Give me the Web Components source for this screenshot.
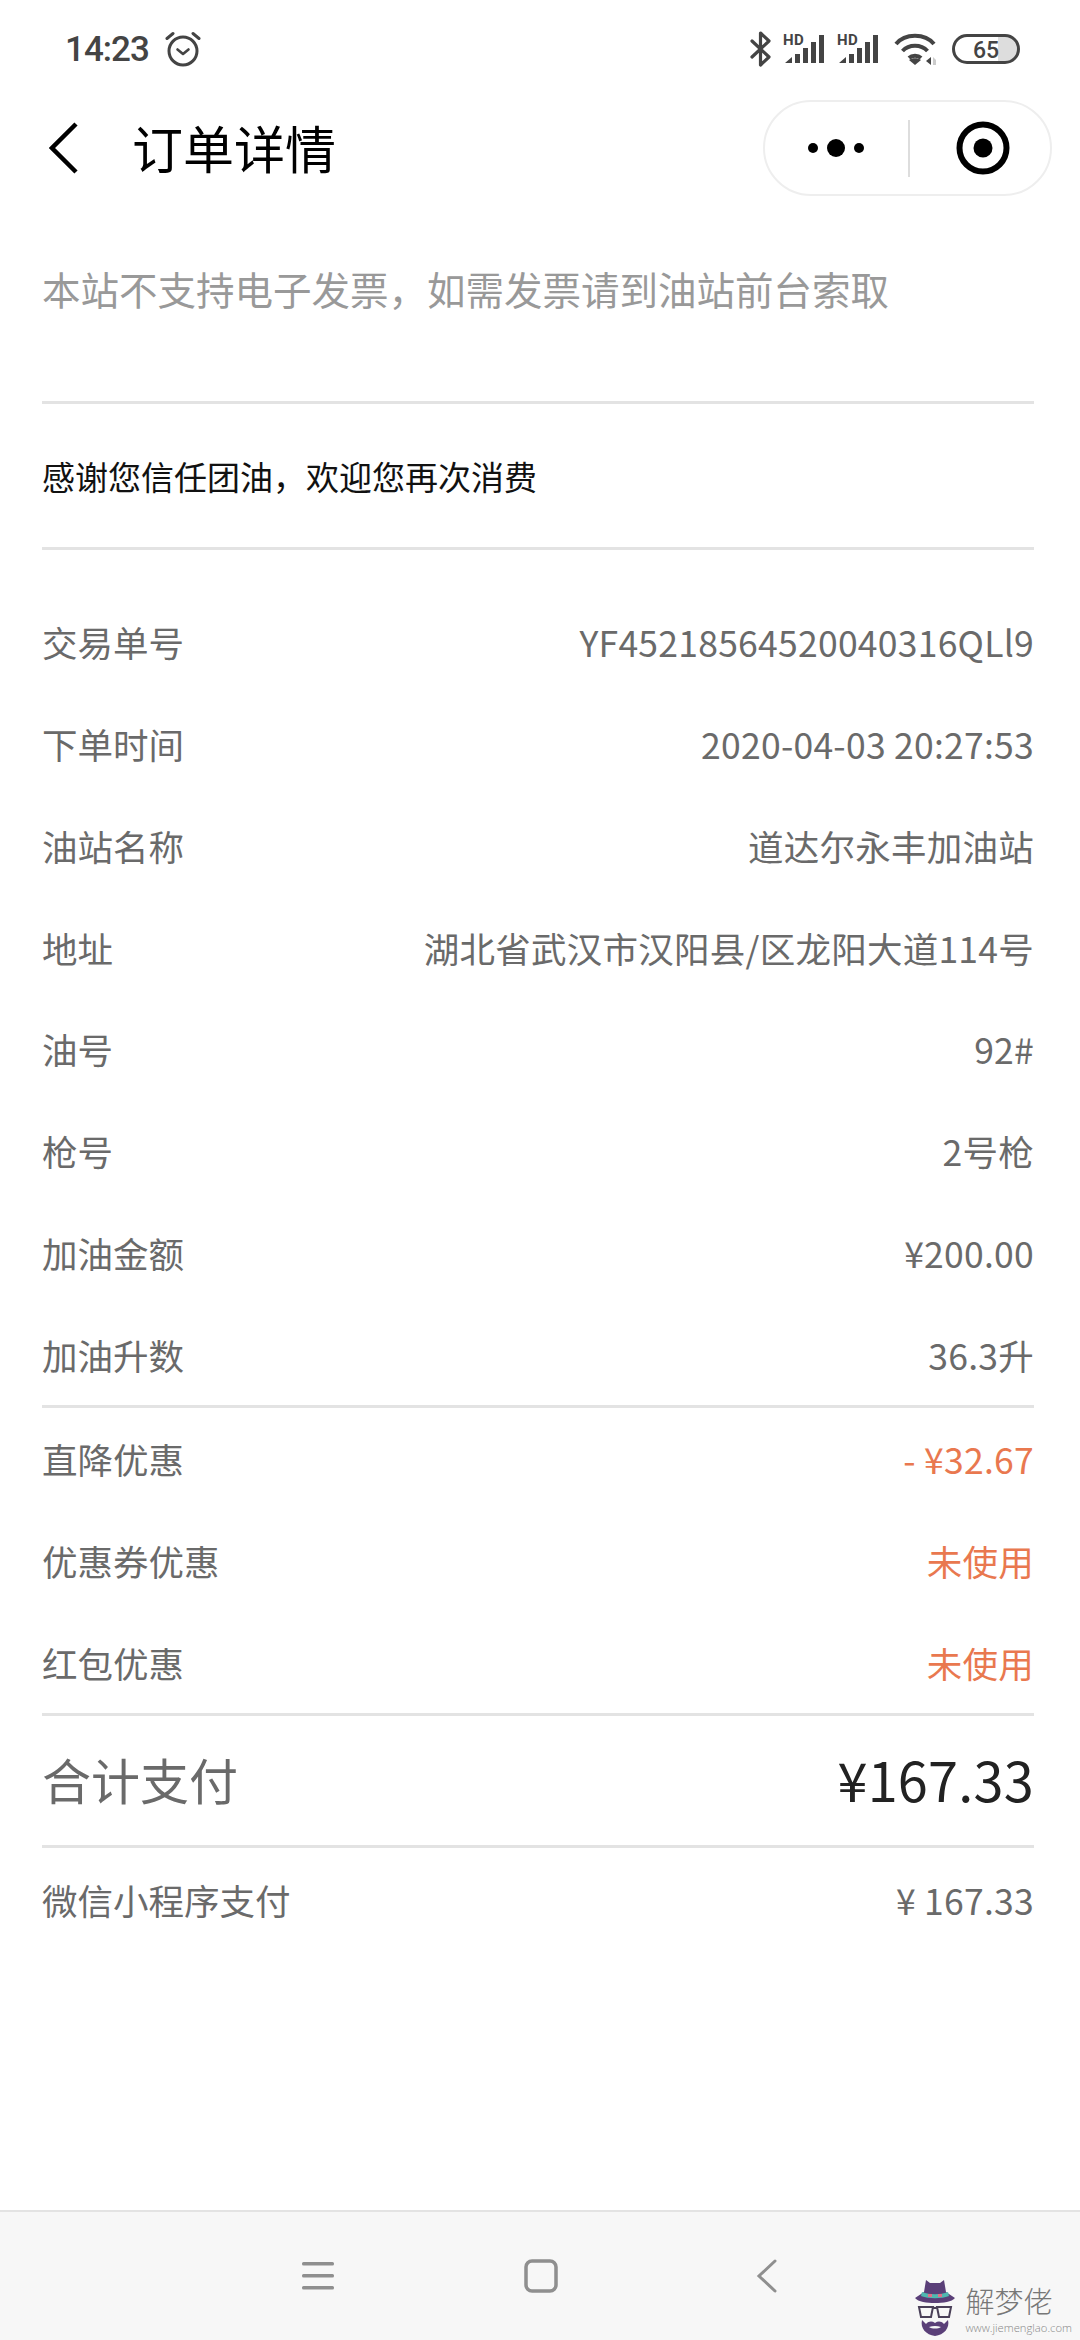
<!DOCTYPE html>
<html lang="zh">
<head>
<meta charset="utf-8">
<title>订单详情</title>
<style>
    html, body { margin: 0; padding: 0; background: #fff; }
    body { font-family: "Noto Sans CJK SC", "Noto Sans", sans-serif; font-weight: 400; }
    #page { display: flex; flex-direction: column; height: 2340px; width: 1080px; overflow: hidden; }
    order-list { flex: 1; }
</style>
</head>
<body>
<div id="page">
    <status-bar></status-bar>
    <title-bar>订单详情</title-bar>
    <order-list>
        <order-note kind="notice">本站不支持电子发票，如需发票请到油站前台索取</order-note>
        <order-rule></order-rule>
        <order-note kind="thanks">感谢您信任团油，欢迎您再次消费</order-note>
        <order-rule></order-rule>
        <order-row first label="交易单号">YF45218564520040316QLl9</order-row>
        <order-row label="下单时间">2020-04-03 20:27:53</order-row>
        <order-row label="油站名称">道达尔永丰加油站</order-row>
        <order-row label="地址">湖北省武汉市汉阳县/区龙阳大道114号</order-row>
        <order-row label="油号">92#</order-row>
        <order-row label="枪号">2号枪</order-row>
        <order-row label="加油金额">¥200.00</order-row>
        <order-row label="加油升数">36.3升</order-row>
        <order-rule></order-rule>
        <order-row kind="discount" label="直降优惠">- ¥32.67</order-row>
        <order-row kind="discount" label="优惠券优惠">未使用</order-row>
        <order-row kind="discount" label="红包优惠">未使用</order-row>
        <order-rule></order-rule>
        <order-row kind="total" label="合计支付">¥167.33</order-row>
        <order-rule></order-rule>
        <order-row kind="pay" label="微信小程序支付">¥ 167.33</order-row>
    </order-list>
    <nav-keys></nav-keys>
</div>

<script>
(function (){
    const statusTemplate = document.createElement("template");
    statusTemplate.innerHTML = `
    <style>
    :host {
        align-items: center;
        box-sizing: border-box;
        color: #444;
        display: flex;
        flex: none;
        height: 100px;
        padding: 0 60px 2px 65px;
    }
    .time {
        font-family: Roboto, "Noto Sans", sans-serif;
        font-size: 35px;
        font-weight: 500;
        letter-spacing: -1px;
        line-height: 1;
        margin-right: 16px;
    }
    .icons {
        align-items: center;
        display: flex;
        margin-left: auto;
    }
    svg { display: block; flex: none; }
    text { font-family: Roboto, "Noto Sans", sans-serif; }
    </style>
    <span class="time">14:23</span>
    <svg width="36" height="36" viewBox="0 0 36 36" fill="none" stroke="#444" stroke-linecap="round" stroke-linejoin="round">
        <circle cx="18" cy="20" r="14" stroke-width="3"/>
        <path d="M12.500 18.500l5.500 4.500 5.500-4.500" stroke-width="2.600"/>
        <path d="M2 7.500L8 2.500M34 7.500L28 2.500" stroke-width="3"/>
    </svg>
    <div class="icons">
        <svg width="22" height="36" viewBox="0 0 22 36" fill="none" stroke="#444" stroke-width="3.200" stroke-linejoin="round" stroke-linecap="round">
            <path d="M2 10l17 16-8.500 8V2l8.500 8L2 26"/>
        </svg>
        <svg style="margin-left:11px" width="42" height="48" viewBox="0 -8 42 48">
            <text x="0" y="12" font-size="15" font-weight="700" letter-spacing=".5" fill="#444">HD</text>
            <path fill="#444" d="M2 30l7-6v6zM12 21h5v9h-5zM20 15h5v15h-5zM28 9h5v21h-5zM36 2h5v28h-5z"/>
        </svg>
        <svg style="margin-left:12px" width="42" height="48" viewBox="0 -8 42 48">
            <text x="0" y="12" font-size="15" font-weight="700" letter-spacing=".5" fill="#444">HD</text>
            <path fill="#444" d="M2 30l7-6v6zM12 21h5v9h-5zM20 15h5v15h-5zM28 9h5v21h-5zM36 2h5v28h-5z"/>
        </svg>
        <svg style="margin-left:15px" width="44" height="32" viewBox="0 0 44 32" fill="none" stroke="#444" stroke-width="4">
            <path d="M2 11C11 0 31 0 40 11"/>
            <path d="M8.500 18c6.500-7 18.500-7 25 0"/>
            <path d="M15 25c3-3 9-3 12 0"/>
            <path fill="#444" stroke="none" d="M21 32l-6-5c3-2.500 9-2.500 12 0z"/>
            <path fill="#444" stroke="none" d="M37 24v8l-5-4z"/>
            <path fill="#ccc" stroke="none" d="M39 24l3 3v5h-3z"/>
        </svg>
        <svg style="margin-left:14px" width="68" height="32" viewBox="0 0 68 32">
            <path fill="#ddd" d="M46 4h8a12 12 0 0 1 0 24h-8z"/>
            <rect x="1.500" y="2.500" width="65" height="27" rx="13.500" fill="none" stroke="#444" stroke-width="3"/>
            <text x="34" y="24.500" font-size="23" font-weight="500" text-anchor="middle" fill="#444">65</text>
        </svg>
    </div>
    `;

    class StatusBar extends HTMLElement {
        constructor() {
            super();
            this.attachShadow({ mode: "open" });
            this.shadowRoot.appendChild(statusTemplate.content.cloneNode(true));
        }
    }

    const titleTemplate = document.createElement("template");
    titleTemplate.innerHTML = `
    <style>
    :host {
        align-items: center;
        box-sizing: border-box;
        color: #000;
        display: flex;
        flex: none;
        height: 96px;
        padding: 0 28px 0 49px;
    }
    svg { display: block; flex: none; }
    .title {
        font-size: 51px;
        line-height: 1;
        margin-left: 53px;
        padding-bottom: 2px;
    }
    .capsule {
        align-items: center;
        border: 2px solid #eee;
        border-radius: 48px;
        box-sizing: border-box;
        display: flex;
        height: 96px;
        margin-left: auto;
        width: 289px;
    }
    .half {
        align-items: center;
        display: flex;
        flex: none;
        justify-content: center;
        width: 143px;
    }
    .half + .line + .half {
        flex: 1;
        padding-left: 5px;
        width: auto;
    }
    .line {
        background: #ddd;
        flex: none;
        height: 57px;
        width: 2px;
    }
    </style>
    <svg width="30" height="52" viewBox="0 0 30 52" fill="none" stroke="#000" stroke-width="4.500">
        <path d="M27 2L3 26l24 24"/>
    </svg>
    <span class="title"><slot></slot></span>
    <div class="capsule">
        <div class="half">
            <svg width="58" height="20" viewBox="0 0 58 20" fill="#000">
                <circle cx="5" cy="10" r="5"/><circle cx="28" cy="10" r="9"/><circle cx="51" cy="10" r="5"/>
            </svg>
        </div>
        <div class="line"></div>
        <div class="half">
            <svg width="54" height="54" viewBox="0 0 54 54">
                <circle cx="27" cy="27" r="23.500" fill="none" stroke="#000" stroke-width="6"/>
                <circle cx="27" cy="27" r="9.500" fill="#000"/>
            </svg>
        </div>
    </div>
    `;

    class TitleBar extends HTMLElement {
        constructor() {
            super();
            this.attachShadow({ mode: "open" });
            this.shadowRoot.appendChild(titleTemplate.content.cloneNode(true));
        }
    }

    const listTemplate = document.createElement("template");
    listTemplate.innerHTML = `
    <style>
    :host {
        display: block;
        padding: 0 46px 0 42px;
    }
    </style>
    <slot></slot>
    `;

    class OrderList extends HTMLElement {
        constructor() {
            super();
            this.attachShadow({ mode: "open" });
            this.shadowRoot.appendChild(listTemplate.content.cloneNode(true));
        }
    }

    const noteTemplate = document.createElement("template");
    noteTemplate.innerHTML = `
    <style>
    :host {
        align-items: center;
        box-sizing: border-box;
        display: flex;
        white-space: nowrap;
    }
    :host([kind="notice"]) {
        color: #999;
        font-size: 38.500px;
        height: 205px;
        padding-bottom: 22px;
    }
    :host([kind="thanks"]) {
        color: #111;
        font-size: 33px;
        height: 143px;
    }
    </style>
    <slot></slot>
    `;

    class OrderNote extends HTMLElement {
        constructor() {
            super();
            this.attachShadow({ mode: "open" });
            this.shadowRoot.appendChild(noteTemplate.content.cloneNode(true));
        }
    }

    const ruleTemplate = document.createElement("template");
    ruleTemplate.innerHTML = `
    <style>
    :host {
        background: #e3e3e3;
        display: block;
        height: 3px;
    }
    </style>
    `;

    class OrderRule extends HTMLElement {
        constructor() {
            super();
            this.attachShadow({ mode: "open" });
            this.shadowRoot.appendChild(ruleTemplate.content.cloneNode(true));
        }
    }

    const rowTemplate = document.createElement("template");
    rowTemplate.innerHTML = `
    <style>
    :host {
        align-items: center;
        box-sizing: border-box;
        color: #6a6a6a;
        display: flex;
        font-size: 35.500px;
        height: 101.750px;
        justify-content: space-between;
        white-space: nowrap;
    }
    :host([first]) { margin-top: 41px; }
    :host([kind="discount"]) .value { color: #e9784f; }
    :host([kind="total"]) { height: 129px; padding-bottom: 4px; }
    :host([kind="total"]) .label { font-size: 49px; }
    :host([kind="total"]) .value { color: #222; font-size: 54px; }
    .value { letter-spacing: .25px; }
    </style>
    <span class="label"></span>
    <span class="value"><slot></slot></span>
    `;

    class OrderRow extends HTMLElement {
        constructor() {
            super();
            this.attachShadow({ mode: "open" });
            this.shadowRoot.appendChild(rowTemplate.content.cloneNode(true));
        }

        connectedCallback() {
            this.shadowRoot.querySelector(".label").textContent = this.getAttribute("label");
        }
    }

    const keysTemplate = document.createElement("template");
    keysTemplate.innerHTML = `
    <style>
    :host {
        align-items: center;
        background: #f7f7f7;
        border-top: 2px solid #e3e3e3;
        box-sizing: border-box;
        display: flex;
        flex: none;
        height: 130px;
        padding: 0 0 0 302px;
        position: relative;
    }
    svg { display: block; flex: none; }
    .mark {
        align-items: flex-start;
        bottom: 4px;
        display: flex;
        gap: 9px;
        position: absolute;
        right: 8px;
    }
    .brand {
        color: #777;
        display: flex;
        flex-direction: column;
        font-size: 29px;
        font-weight: 300;
        line-height: 30px;
        margin-top: 5px;
    }
    .url {
        color: #888;
        font-family: "Open Sans", sans-serif;
        font-size: 11.250px;
        font-weight: 300;
        line-height: 14px;
        margin-top: 6px;
    }
    </style>
    <svg width="32" height="30" viewBox="0 0 32 30" fill="#8f8f8f">
        <rect y="1" width="32" height="3.500" rx="1.500"/>
        <rect y="13" width="32" height="3.500" rx="1.500"/>
        <rect y="25" width="32" height="3.500" rx="1.500"/>
    </svg>
    <svg style="margin-left:190px" width="34" height="34" viewBox="0 0 34 34" fill="none" stroke="#8f8f8f" stroke-width="3.500">
        <rect x="2" y="2" width="30" height="30" rx="6"/>
    </svg>
    <svg style="margin-left:198px" width="21" height="34" viewBox="0 0 21 34" fill="none" stroke="#8f8f8f" stroke-width="3" stroke-linecap="round">
        <path d="M19 2L3 17l16 15"/>
    </svg>
    <div class="mark">
        <svg width="42" height="56" viewBox="0 0 42 56">
            <path fill="#5a3f78" d="M12 0l4 3h10l4-3 2 12 9 6c-3 4-12 5-20 5S4 22 1 18l9-6z"/>
            <path fill="#4fb8b0" d="M8 12c8 3 18 3 26 0l1 4c-8 3-20 3-28 0z"/>
            <path fill="#e0708a" d="M14 14h4v3h-4zM24 14h4v3h-4z"/>
            <g fill="none" stroke="#4a4058" stroke-width="2">
                <path d="M5 27h14l-2 10h-10zM23 27h14l-2 10h-10zM19 28h4"/>
            </g>
            <path fill="#5a3f78" d="M8 40l4 4c3-3 6-3 9-1 3-2 6-2 9 1l4-4c2 8-4 15-13 16-9-1-15-8-13-16z"/>
            <path fill="#f7f7f7" d="M15 47c4-1.500 8-1.500 12 0-3 2-9 2-12 0z"/>
        </svg>
        <div class="brand">解梦佬<span class="url">www.jiemenglao.com</span></div>
    </div>
    `;

    class NavKeys extends HTMLElement {
        constructor() {
            super();
            this.attachShadow({ mode: "open" });
            this.shadowRoot.appendChild(keysTemplate.content.cloneNode(true));
        }
    }

    customElements.define("status-bar", StatusBar);
    customElements.define("title-bar", TitleBar);
    customElements.define("order-list", OrderList);
    customElements.define("order-note", OrderNote);
    customElements.define("order-rule", OrderRule);
    customElements.define("order-row", OrderRow);
    customElements.define("nav-keys", NavKeys);
})();
</script>
</body>
</html>
